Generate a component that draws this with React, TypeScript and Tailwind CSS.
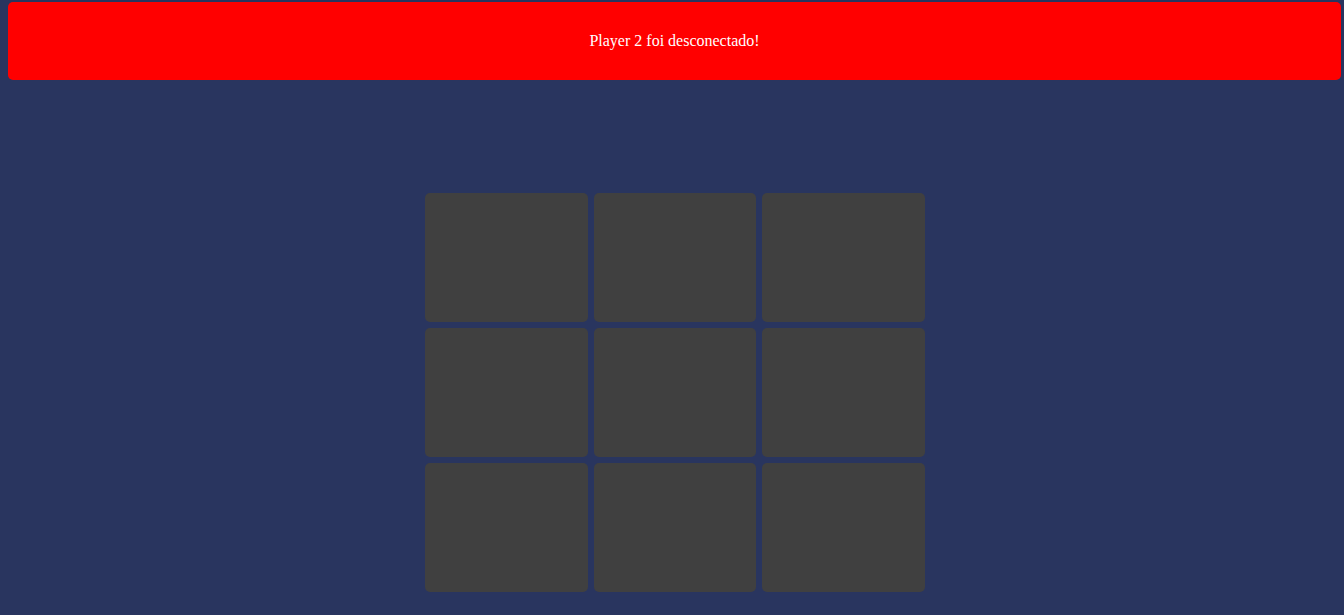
import React from 'react';

export default function App() {
  const cells = Array.from({ length: 9 });
  return (
    <div className="min-h-[615px] w-full bg-[#29355f] overflow-hidden">
      {/* Disconnect banner */}
      <div className="pt-[2px] pl-[8px] pr-[3px]">
        <div className="flex h-[78px] items-center justify-center rounded-[5px] bg-[#ff0000] text-white text-[16px] font-['Liberation_Serif',serif]">
          Player 2 foi desconectado!
        </div>
      </div>

      {/* Board */}
      <div className="mt-[113px] flex justify-center pl-[6px]">
        <div className="grid w-[500px] grid-cols-3 gap-[6px]">
          {cells.map((_, i) => (
            <div key={i} className="h-[129px] rounded-[5px] bg-[#404040]" />
          ))}
        </div>
      </div>
    </div>
  );
}
